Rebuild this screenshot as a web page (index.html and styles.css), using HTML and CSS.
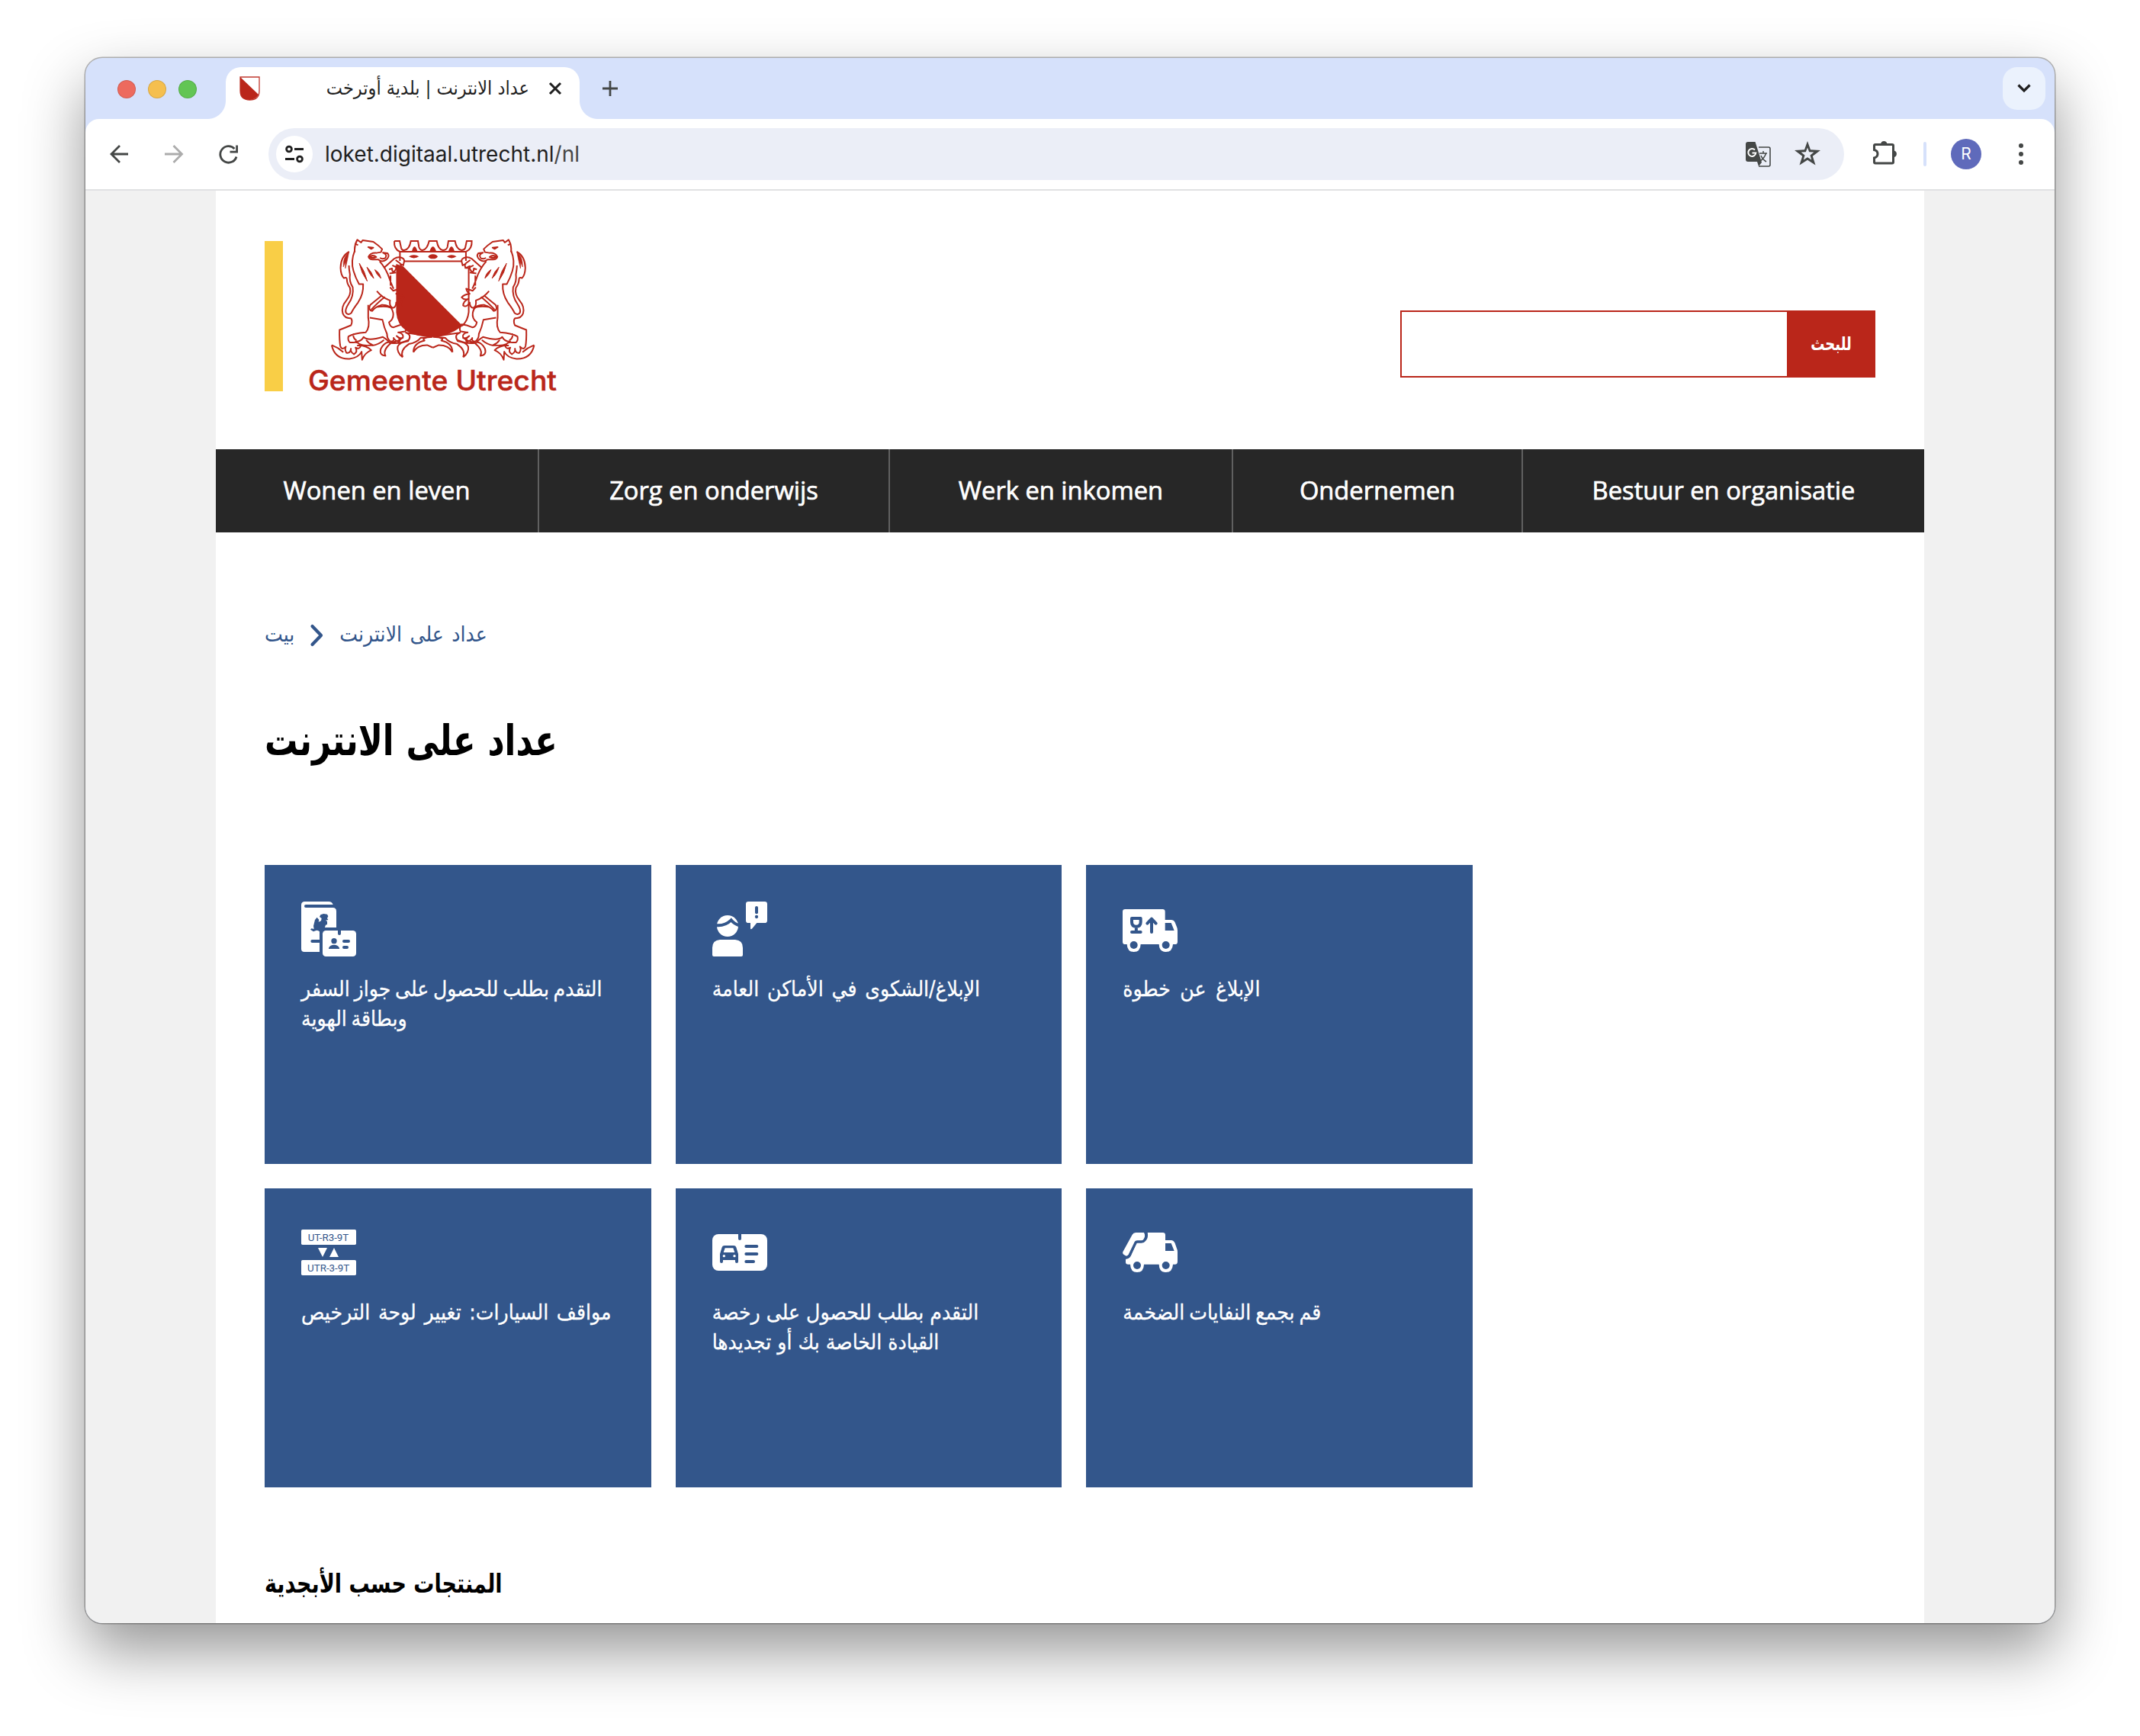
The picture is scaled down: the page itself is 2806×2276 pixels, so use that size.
FILE: index.html
```html
<!DOCTYPE html>
<html lang="ar">
<head>
<meta charset="utf-8">
<title>عداد الانترنت | بلدية أوترخت</title>
<link rel="stylesheet" href="styles.css">
</head>
<body>
<div class="window">
  <div class="tabstrip">
    <div class="lights"><i class="light red"></i><i class="light amber"></i><i class="light green"></i></div>
    <div class="tab">
      <svg class="favicon" viewBox="0 0 27 32"><path d="M1 1H26V19Q26 31 13.500 31Q1 31 1 19Z" fill="#fff" stroke="#c0392f" stroke-width="1.300"/><path d="M1 1L25 24Q21 31 13.500 31Q1 31 1 19Z" fill="#ba261a"/></svg>
      <span class="tab-title" dir="rtl">عداد الانترنت | بلدية أوترخت</span>
      <svg class="tab-close" viewBox="0 0 18 18"><path d="M2 2L16 16M16 2L2 16" stroke="#1f1f1f" stroke-width="3" fill="none"/></svg>
    </div>
    <svg class="new-tab" viewBox="0 0 22 22"><path d="M11 1V21M1 11H21" stroke="#444746" stroke-width="2.800" fill="none"/></svg>
    <div class="tab-search"><svg viewBox="0 0 18 12"><path d="M1.500 1.500L9 9L16.500 1.500" fill="none" stroke="#1f1f1f" stroke-width="3.200"/></svg></div>
  </div>
  <div class="toolbar">
    <svg class="ico back" viewBox="0 0 24 24"><path d="M23 12H1.500M12 1L1 12L12 23" fill="none" stroke="#444746" stroke-width="2.800"/></svg>
    <svg class="ico forward" viewBox="0 0 24 24"><path d="M0 12H22M11.500 1L22.500 12L11.500 23" fill="none" stroke="#acacac" stroke-width="2.800"/></svg>
    <svg class="ico reload" viewBox="0 0 25 25"><path d="M23 15.500A10.800 10.800 0 1 1 20.500 5" fill="none" stroke="#444746" stroke-width="2.800"/><path d="M23.600 .5V9.200H14.500" fill="none" stroke="#444746" stroke-width="2.800"/></svg>
    <div class="omnibox">
      <span class="site-info"><svg viewBox="0 0 24 24"><g fill="none" stroke="#1f1f1f" stroke-width="2.800"><circle cx="5" cy="5.500" r="3.400"/><path d="M12 5.500H24M0 18.500H12"/><circle cx="19" cy="18.500" r="3.400"/></g></svg></span>
      <span class="url">loket.digitaal.utrecht.nl<span class="path">/nl</span></span>
      <svg class="translate" viewBox="0 0 33 33"><path d="M17 7H30Q32 7 32 9V30Q32 32 30 32H17" fill="none" stroke="#444746" stroke-width="1.600"/><path d="M18 15H28M23 12V15M26.500 15Q25 21 18 26M20 18Q22 23 27 26" fill="none" stroke="#444746" stroke-width="1.500"/><path d="M3 0H12.500L21 27L17 32L15 26H3Q0 26 0 23V3Q0 0 3 0Z" fill="#444746"/><path d="M12 10.500A5 5 0 1 0 13.300 14.500H8.500" fill="none" stroke="#fff" stroke-width="2"/></svg>
      <svg class="star" viewBox="0 0 34 32"><path fill-rule="evenodd" fill="#444746" d="M17 0L21 11.300L34 12L23.800 19.700L27.500 31.500L17 24.800L6.500 31.500L10.200 19.700L0 12L13 11.300ZM17 8.500L14.800 14.200L8.600 14.500L13.500 18.600L11.800 24.600L17 21.200L22.200 24.600L20.500 18.600L25.400 14.500L19.200 14.200Z"/></svg>
    </div>
    <svg class="puzzle" viewBox="0 0 32 32"><path d="M3 5.500H25Q26.500 5.500 26.500 7V28.500Q26.500 30 25 30H3Q1.500 30 1.500 28.500V23Q6 22 6 17.800Q6 13.500 1.500 12.500V7Q1.500 5.500 3 5.500Z" fill="none" stroke="#444746" stroke-width="3"/><path d="M10 5A4.300 4.800 0 0 1 18.500 5ZM27.500 13.500A4.600 4.400 0 0 1 27.500 22Z" fill="#444746"/></svg>
    <i class="divider"></i>
    <span class="avatar">R</span>
    <svg class="menu" viewBox="0 0 6 28"><g fill="#444746"><circle cx="3" cy="3" r="3"/><circle cx="3" cy="14" r="3"/><circle cx="3" cy="25" r="3"/></g></svg>
  </div>
  <div class="viewport">
    <div class="page">
      <header class="header">
        <div class="brand">
          <i class="brand-bar"></i>
          <svg class="brand-logo" viewBox="225 68 975 604">
            <defs>
              <g id="lion" fill="none" stroke="#ba261a" stroke-width="6" stroke-linejoin="round">
                <path d="M405 124Q402 98 415 75L430 86L436 77L478 83Q500 98 513 112L508 124L490 127Q466 126 459 142Q462 154 478 153H498Q512 166 528 154Q545 140 534 128L516 126Q536 134 524 148Q512 152 504 146"/>
                <path d="M461 143Q476 132 490 143Q478 150 461 143M405 90L418 96"/>
                <path d="M458 104L478 106L470 111Z" fill="#ba261a"/>
                <path d="M405 118Q388 160 400 198Q408 225 422 250H438Q440 290 418 322Q398 348 391 364Q378 374 370 362Q366 350 380 328Q402 296 397 262Q382 240 386 212Q382 190 382 176"/>
                <path d="M383 122Q350 140 349 186Q350 214 362 226Q374 220 374 232Q374 248 386 264Q392 290 372 314Q350 340 358 366Q366 386 391 384"/>
                <path d="M382 124Q358 142 360 182L368 162V188L376 154Z" fill="#ba261a" stroke-width="2"/>
                <path d="M423 168Q430 205 454 238Q446 200 423 168M453 183Q462 212 480 227Q472 200 453 183M484 193Q490 212 508 227Q504 205 484 193" fill="#ba261a" stroke-width="3"/>
                <path d="M503 160Q530 190 543 232Q552 256 558 268M523 183L560 150Q572 142 582 144Q602 148 600 160L596 176L584 170Q592 180 580 186Q570 176 566 180Q572 190 560 200Q552 204 552 188L540 192M566 155L584 168M553 176L570 184M542 208L568 204M546 216V256"/>
                <path d="M544 262L556 276L582 268Q578 284 568 288Q590 290 600 302Q590 314 574 308Q594 318 594 334Q580 344 568 322Q568 342 554 344Q540 336 544 314Q514 304 492 277"/>
                <path d="M512 294Q490 312 466 332Q456 352 474 356Q484 340 510 332Q550 330 556 362Q560 386 540 400Q544 420 558 420Q580 410 600 408Q612 424 604 436Q580 440 576 440Q600 444 594 462Q584 466 570 454Q590 470 578 478Q562 470 558 462Q562 476 546 476Q532 466 532 446Q520 420 514 390L464 382M470 350Q500 318 524 300M490 340Q530 334 552 344"/>
                <path d="M458 332V382Q466 420 448 440Q400 444 380 456Q376 470 386 480H400Q420 476 428 494Q424 508 408 500Q418 516 402 526Q386 516 390 504Q388 524 372 520Q364 506 370 496Q354 512 348 494Q344 470 345 430Q366 422 390 412Q398 396 390 384M400 444Q396 462 412 472"/>
                <path d="M314 490Q340 500 360 518M314 490Q326 546 384 544Q420 540 432 516L434 548Q444 520 470 510Q450 490 414 492M406 476Q430 478 440 458Q456 476 516 458Q530 466 540 478Q520 480 508 504Q500 530 526 532Q514 510 548 482M474 492Q500 488 520 470M450 470Q460 484 476 490Q440 494 424 486"/>
                <path d="M540 482Q580 476 594 460M548 482Q582 486 618 470Q630 448 604 440M594 538Q570 520 574 496Q580 480 618 474M594 538Q582 510 618 486Q650 480 664 462L712 458M612 442Q660 448 712 458M636 518Q636 482 680 472Q668 464 690 460M636 518Q650 490 690 490L713 500"/>
              </g>
            </defs>
            <path d="M568 170V360Q576 458 713 458Q770 458 830 414L596 180Z" fill="#ba261a"/>
            <g fill="none" stroke="#ba261a" stroke-width="6">
              <path d="M838 186H854V360Q850 396 828 414M583 158V122H843V158M600 160H826M583 148V122M561 80H582L588 108Q592 118 600 116Q620 114 626 80H654L658 104Q662 116 672 116Q690 114 698 80H728Q734 114 752 116Q766 116 770 104L774 80H800Q806 114 826 116Q836 116 840 108L846 80H866Q868 110 844 122M561 80Q558 112 583 122"/>
            </g>
            <g fill="#ba261a"><path d="M630 120Q640 84 652 120ZM700 120Q713 84 726 120ZM774 120Q786 84 798 120ZM618 141Q638 128 658 141Q638 154 618 141ZM768 141Q786 128 806 141Q786 154 768 141Z"/><ellipse cx="713" cy="141" rx="18" ry="9"/></g>
            <use href="#lion"/><use href="#lion" transform="translate(1426 0) scale(-1 1)"/>
            <text x="221" y="669" textLength="980" lengthAdjust="spacingAndGlyphs" class="brand-name">Gemeente Utrecht</text>
          </svg>
        </div>
        <form class="search" dir="ltr"><input class="search-field" type="text" aria-label="للبحث"><button class="search-button" type="button"><span>للبحث</span></button></form>
      </header>
      <nav class="nav"><a>Wonen en leven</a><a>Zorg en onderwijs</a><a>Werk en inkomen</a><a>Ondernemen</a><a>Bestuur en organisatie</a></nav>
      <main class="main">
        <div class="crumbs"><a>بيت</a><svg viewBox="0 0 17 28"><path d="M2.500 2L14 14L2.500 26" fill="none" stroke="#33568b" stroke-width="4.200" stroke-linejoin="round" stroke-linecap="round"/></svg><a>عداد على الانترنت</a></div>
        <h1>عداد على الانترنت</h1>
        <div class="tiles">
          <a class="tile passport">
            <svg viewBox="0 0 216 216"><path fill="#fff" d="M14 0H108Q121 0 125 12H18A6 6 0 0 0 18 24H124Q138 24 138 38V102H88Q76 102 72 114V198H12Q0 198 0 186V14Q0 0 14 0Z"/><path fill="#33568b" d="M62 62L70 72L68 80L78 76L80 66L72 60L76 52L88 48L102 50L106 58L102 66L106 72L96 74L102 78V90L96 92L92 104H84V118H72Q66 112 58 114L48 118L36 110L40 106L50 108L48 96L54 72Z"/><rect x="37" y="150" width="40" height="12" rx="6" fill="#33568b"/><rect x="72" y="102" width="144" height="114" fill="#33568b"/><rect x="84" y="114" width="132" height="102" rx="13" fill="#fff"/><g fill="#33568b"><path d="M144 112H156V126Q156 132 150 132Q144 132 144 126Z"/><circle cx="129" cy="155" r="11"/><path d="M108 182Q114 170 129 170Q144 170 150 182V186H108Z"/><rect x="162" y="150" width="30" height="12" rx="6"/><rect x="162" y="174" width="24" height="12" rx="6"/></g></svg>
            <p dir="rtl">التقدم بطلب للحصول على جواز السفر<br>وبطاقة الهوية</p>
          </a>
          <a class="tile report">
            <svg viewBox="0 0 216 216"><path fill="#fff" d="M142 0H206Q216 0 216 10V74Q216 84 206 84H175L157 106Q150 112 150 104V84H142Q132 84 132 74V10Q132 0 142 0ZM30 150H90Q120 152 120 182V210Q120 216 114 216H6Q0 216 0 210V182Q0 152 30 150Z"/><circle cx="60" cy="96" r="42" fill="#fff"/><path d="M12 93Q48 98 74 73Q86 88 108 95" fill="none" stroke="#33568b" stroke-width="12"/><rect x="168" y="18" width="12" height="31" rx="6" fill="#33568b"/><circle cx="174" cy="60" r="6.500" fill="#33568b"/></svg>
            <p dir="rtl">الإبلاغ/الشكوى في الأماكن العامة</p>
          </a>
          <a class="tile moving">
            <svg viewBox="0 0 216 216"><path fill="#fff" d="M10 30H157Q167 30 167 40V72H190Q201 72 206 82L213 100Q216 106 216 114V158Q216 168 206 168H198Q196 198 170 198Q144 198 143 168H71Q70 198 44 198Q18 198 17 168H10Q0 168 0 158V40Q0 30 10 30Z"/><path fill="#33568b" d="M167 84H191L203 114H167Z"/><circle cx="44" cy="171" r="15" fill="#33568b"/><circle cx="170" cy="171" r="15" fill="#33568b"/><g fill="none" stroke="#33568b" stroke-width="12" stroke-linecap="round" stroke-linejoin="round"><path d="M36 66H71V81Q71 98 53.500 98Q36 98 36 81ZM53.500 98V120M36 120H71M114 120V70M97 86L114 68L131 86"/></g></svg>
            <p dir="rtl">الإبلاغ عن خطوة</p>
          </a>
          <a class="tile plate">
            <svg viewBox="0 0 216 216"><g fill="#fff"><rect y="18" width="216" height="60" rx="5"/><rect y="138" width="216" height="60" rx="5"/><path d="M66 90H102L84 126ZM111 126H147L129 90Z"/></g><text x="26" y="63" textLength="161" lengthAdjust="spacingAndGlyphs">UT-R3-9T</text><text x="24" y="183" textLength="166" lengthAdjust="spacingAndGlyphs">UTR-3-9T</text></svg>
            <p dir="rtl">مواقف السيارات: تغيير لوحة الترخيص</p>
          </a>
          <a class="tile licence">
            <svg viewBox="0 0 216 216"><rect y="36" width="216" height="144" rx="24" fill="#fff"/><g fill="#33568b"><path d="M102 34H114V54Q114 60 108 60Q102 60 102 54Z"/><rect x="127" y="78" width="54" height="12" rx="6"/><rect x="127" y="108" width="54" height="12" rx="6"/><rect x="127" y="138" width="41" height="12" rx="6"/><path fill-rule="evenodd" d="M48 81H84Q92 81 94 88L102 114V144Q102 150 96 150Q90 150 90 144V138H42V144Q42 150 36 150Q30 150 30 144V114L38 88Q40 81 48 81ZM50 91L44 108H88L82 91Z"/></g><circle cx="46" cy="122" r="5" fill="#fff"/><circle cx="87" cy="122" r="5" fill="#fff"/></svg>
            <p dir="rtl">التقدم بطلب للحصول على رخصة<br>القيادة الخاصة بك أو تجديدها</p>
          </a>
          <a class="tile waste">
            <svg viewBox="0 0 216 216"><path fill="#fff" d="M98 30H158Q168 30 168 40V60H190Q201 60 206 72L213 92Q216 98 216 106V144Q216 155 206 155H198Q196 186 170 186Q144 186 143 155H84Q83 186 57 186Q31 186 30 155H22Q12 155 12 146V134Q28 134 34 118L56 66H76Q104 64 98 30ZM52 30H84Q92 44 84 58Q80 64 74 64H56Q50 64 48 70L24 118Q20 124 14 122L4 116Q-1 112 1 106L38 38Q42 30 52 30Z"/><path fill="none" stroke="#33568b" stroke-width="10" d="M91 28Q96 46 86 60Q82 66 74 66H58Q52 66 50 72L28 118Q22 128 10 128"/><path fill="#33568b" d="M168 72H191L203 102H168Z"/><circle cx="57" cy="159" r="15" fill="#33568b"/><circle cx="170" cy="159" r="15" fill="#33568b"/></svg>
            <p dir="rtl">قم بجمع النفايات الضخمة</p>
          </a>
        </div>
        <h2>المنتجات حسب الأبجدية</h2>
      </main>
    </div>
  </div>
</div>
</body>
</html>
```
FILE: styles.css
```css
:root {
  --red: #ba261a;
  --blue: #33568b;
  --strip: #d6e1fb;
  --arabic: "DejaVu Sans Condensed", "DejaVu Sans", sans-serif;
}

* { box-sizing: border-box; margin: 0; padding: 0; }
i { display: block; }
svg { display: block; flex: none; overflow: visible; }

body {
  height: 2276px;
  padding: 76px 112px 148px;
  background: #fff;
  overflow: hidden;
}

/* Window frame */
.window {
  display: flex;
  flex-direction: column;
  width: 2582px;
  height: 2052px;
  border-radius: 22px;
  background: var(--strip);
  overflow: hidden;
  box-shadow: 0 0 0 1.500px rgba(0, 0, 0, .28), 0 36px 80px rgba(0, 0, 0, .42);
}

.tabstrip {
  display: flex;
  height: 80px;
  padding: 12px 12px 0 42px;
  flex: none;
}
.lights { display: flex; gap: 16px; margin-top: 17px; width: 142px; }
.light { width: 24px; height: 24px; border-radius: 50%; border: 1px solid rgba(0, 0, 0, .12); }
.red { background: #ed6a5e; }
.amber { background: #f5bf4f; }
.green { background: #62c554; }

.tab {
  position: relative;
  display: flex;
  width: 464px;
  height: 68px;
  padding: 0 23px 0 18px;
  border-radius: 20px 20px 0 0;
  background: #fff;
}
.tab::before, .tab::after {
  content: "";
  position: absolute;
  bottom: 0;
  width: 24px;
  height: 24px;
}
.tab::before { left: -24px; background: radial-gradient(circle at 0 0, transparent 23.500px, #fff 24.500px); }
.tab::after { right: -24px; background: radial-gradient(circle at 100% 0, transparent 23.500px, #fff 24.500px); }
.favicon { width: 27px; height: 32px; margin-top: 12px; }
.tab-title {
  flex: 1;
  margin-right: 25px;
  font: 25px/56px var(--arabic);
  color: #1f1f1f;
  white-space: nowrap;
}
.tab-close { width: 18px; height: 18px; margin-top: 19px; }
.new-tab { width: 22px; height: 22px; margin: 17px auto 0 29px; }
.tab-search {
  display: flex;
  align-items: center;
  justify-content: center;
  width: 56px;
  height: 56px;
  border-radius: 19px;
  background: #ebf2fd;
}
.tab-search svg { width: 18px; height: 12px; }

.toolbar {
  display: flex;
  align-items: center;
  height: 94px;
  padding: 0 41px 0 33px;
  border-bottom: 2px solid #e0e1e3;
  border-radius: 18px 18px 0 0;
  background: #fff;
  flex: none;
}
.ico { width: 24px; height: 24px; margin-right: 47px; }
.reload { width: 25px; height: 25px; margin-right: 40px; }
.omnibox {
  display: flex;
  align-items: center;
  width: 2066px;
  height: 68px;
  padding: 0 31px 0 10px;
  border-radius: 34px;
  background: #ebeef7;
}
.site-info {
  display: flex;
  align-items: center;
  justify-content: center;
  width: 48px;
  height: 48px;
  margin-right: 16px;
  border-radius: 50%;
  background: #fff;
}
.site-info svg { width: 24px; height: 24px; }
.url { margin-right: auto; font: 28px/68px Inter, sans-serif; color: #1f1f1f; }
.path { color: #474747; }
.translate { width: 33px; height: 33px; margin-right: 31px; }
.star { width: 34px; height: 32px; margin-top: -3px; }
.puzzle { width: 32px; height: 32px; margin: -4px 34px 0 38px; }
.divider { width: 4px; height: 32px; margin-right: 32px; border-radius: 2px; background: var(--strip); }
.avatar {
  width: 40px;
  height: 40px;
  margin-right: 49px;
  border-radius: 50%;
  background: #5f6abb;
  color: #fff;
  font: 21px/40px Inter, sans-serif;
  text-align: center;
}
.menu { width: 6px; height: 28px; }

/* Web page */
.viewport { flex: 1; padding: 0 171px; background: #f1f1f1; }
.page { height: 100%; background: #fff; }

.header { display: flex; justify-content: space-between; height: 339px; padding: 0 64px; }
.brand { display: flex; padding-top: 62px; }
.brand-bar { width: 24px; height: 197px; margin: 4px 34px 0 0; background: #f9ce46; }
.brand-logo { width: 325px; height: 201px; }
.brand-name { fill: var(--red); font: 500 110px Inter, sans-serif; stroke: var(--red); stroke-width: 1.500px; }

.search { display: flex; width: 623px; height: 88px; margin-top: 157px; }
.search-field { flex: 1; border: 2px solid var(--red); border-right: 0; border-radius: 0; background: #fff; }
.search-button {
  width: 116px;
  border: 0;
  background: var(--red);
  color: #fff;
  font: bold 20px/84px var(--arabic);
}
.search-button span { display: block; transform: scaleY(1.18); }

.nav {
  display: grid;
  grid-template-columns: 424px 460px 450px 380px 1fr;
  height: 109px;
  background: #272727;
}
.nav a {
  border-right: 2px solid #606060;
  color: #fff;
  font: 500 32.700px/108px "Open Sans", sans-serif;
  text-align: center;
  -webkit-text-stroke: .7px #fff;
}
.nav a:last-child { border-right: 0; }

.main { padding: 0 64px; font-family: var(--arabic); }
.crumbs { display: flex; align-items: center; gap: 21px; height: 40px; margin-top: 115px; color: var(--blue); font-size: 28px; line-height: 38px; word-spacing: 2.500px; }
.crumbs a { padding-bottom: 3px; }
.crumbs svg { width: 17px; height: 28px; }

/* Arabic headings are set slightly taller than the face's own proportions */
h1, h2 { transform-origin: 0 68%; transform: scaleY(1.15); }
h1 { margin-top: 84px; font-size: 48px; line-height: 70px; word-spacing: 1px; }

.tiles { display: grid; grid-template-columns: repeat(3, 1fr); grid-auto-rows: 392px; gap: 32px; width: 1584px; margin-top: 127px; }
.tile { padding: 48px; background: var(--blue); color: #fff; }
.tile svg { width: 72px; height: 72px; }
.tile text { fill: var(--blue); font: 400 39px Roboto, sans-serif; }
.tile p { margin-top: 23px; font-size: 28px; line-height: 39.200px; text-align: left; white-space: nowrap; -webkit-text-stroke: .3px #fff; }
.passport p { word-spacing: -2.300px; }
.report p { word-spacing: 2.800px; }
.moving p { word-spacing: 4.500px; }
.plate p { word-spacing: 2.700px; }
.waste p { word-spacing: -2px; }

h2 { margin-top: 104px; font-size: 30px; line-height: 48px; }
```
